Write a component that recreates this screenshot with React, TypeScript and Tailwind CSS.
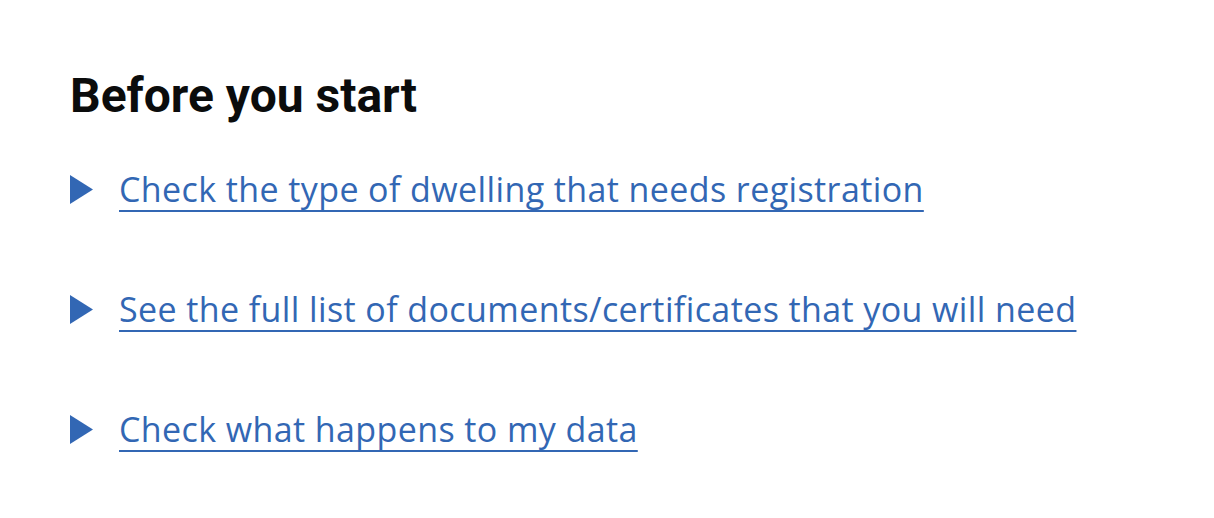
const links = [
  'Check the type of dwelling that needs registration',
  'See the full list of documents/certificates that you will need',
  'Check what happens to my data',
];

function Arrow() {
  return (
    <svg width="23" height="29" viewBox="0 0 23 29" className="shrink-0">
      <polygon points="0,0 23,14.5 0,29" fill="#3267b4" />
    </svg>
  );
}

export default function App() {
  return (
    <div className="min-h-[518px] w-full bg-white pl-[70px] pt-[68px]">
      <h2 className="font-['Roboto',sans-serif] text-[48px] leading-[56px] font-bold text-[#0b0c0c]">
        Before you start
      </h2>

      <ul className="mt-[42px] flex flex-col gap-[74px]">
        {links.map((text) => (
          <li key={text} className="flex items-center gap-[26px]">
            <Arrow />
            <a
              href="#"
              className="font-['Open_Sans',sans-serif] text-[34px] leading-[46px] tracking-[0.4px] text-[#3267b4] underline decoration-2 underline-offset-[8px]"
            >
              {text}
            </a>
          </li>
        ))}
      </ul>
    </div>
  );
}
